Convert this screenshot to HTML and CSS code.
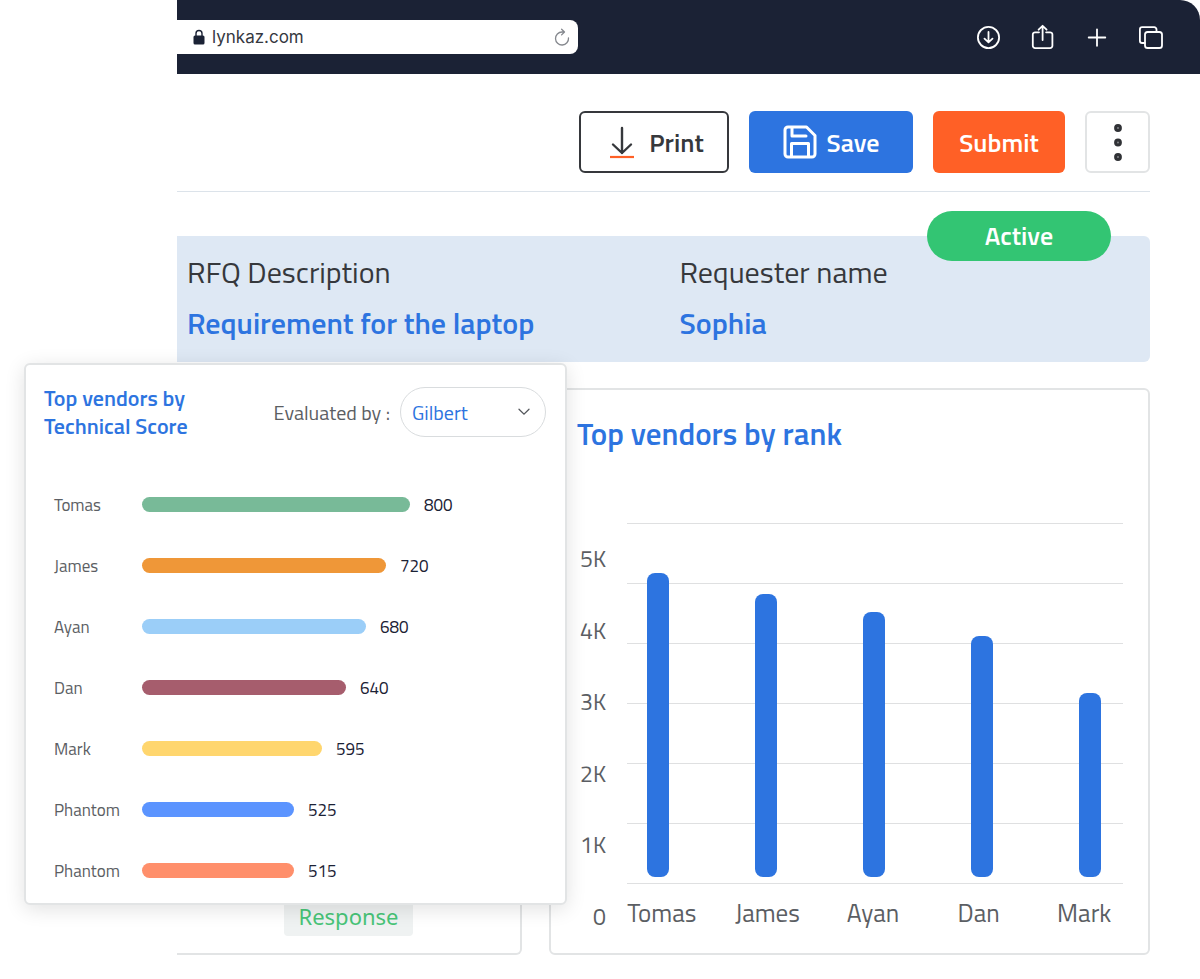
FILE: index.html
```html
<!DOCTYPE html>
<html lang="en">
<head>
  <meta charset="UTF-8" />
  <meta name="viewport" content="width=device-width, initial-scale=1.0"/>
  <title>Lynkaz - RFQ</title>
  <link rel="stylesheet" href="styles.css">
</head>
<body>

  <div class="browser">
    <!-- browser bar -->
    <header class="browser-bar">
      <div class="address">
        <svg class="lock" viewBox="0 0 12 16" width="12" height="16" aria-hidden="true">
          <path d="M3 7V4.500a3 3 0 0 1 6 0V7" fill="none" stroke="#1b2235" stroke-width="1.400"/>
          <rect x="0.500" y="6.500" width="11" height="9" rx="1.500" fill="#1b2235"/>
        </svg>
        <input type="text" value="lynkaz.com" aria-label="Address">
        <button class="icon-btn" aria-label="Reload">
          <svg viewBox="0 0 16 18" width="16" height="18" fill="none" stroke="#85888e" stroke-width="1.300" stroke-linecap="round" stroke-linejoin="round">
            <path d="M14.500 10A6.500 6.500 0 1 1 8 4h2.400M7.600 1.200l2.900 2.800-2.900 2.900"/>
          </svg>
        </button>
      </div>
      <nav class="browser-icons">
        <button class="icon-btn" aria-label="Downloads">
          <svg viewBox="0 0 26 26" width="26" height="26">
            <circle cx="12.500" cy="13.500" r="10.600"/>
            <path d="M12.500 8v10M8.500 14.700l4 3.600 4-3.600"/>
          </svg>
        </button>
        <button class="icon-btn" aria-label="Share">
          <svg viewBox="0 0 26 26" width="26" height="26">
            <path d="M9 8.300H5.100a2.300 2.300 0 0 0-2.300 2.300v11.200a2.300 2.300 0 0 0 2.300 2.300h15a2.300 2.300 0 0 0 2.300-2.300V10.600a2.300 2.300 0 0 0-2.300-2.300h-4M12.600 16V2M8.600 5.700l4-3.900 4 3.900"/>
          </svg>
        </button>
        <button class="icon-btn" aria-label="New tab">
          <svg viewBox="0 0 26 26" width="26" height="26">
            <path d="M13 5.300v16.500M4.700 13.500h16.600"/>
          </svg>
        </button>
        <button class="icon-btn" aria-label="Tabs">
          <svg viewBox="0 0 26 26" width="26" height="26">
            <rect x="7" y="8" width="17" height="16" rx="2.600"/>
            <path d="M6.800 19H4.200a2.300 2.300 0 0 1-2.300-2.300V5.500a2.300 2.300 0 0 1 2.300-2.300h12a2.300 2.300 0 0 1 2.300 2.300v2.300"/>
          </svg>
        </button>
      </nav>
    </header>

    <main class="content">
      <div class="toolbar">
        <button class="btn btn-print">
          <svg viewBox="0 0 24 34" width="24" height="34" fill="none" aria-hidden="true">
            <path d="M12 3v25M3 19.500l9 8.500 9-8.500" stroke="#36383c" stroke-width="2.400" stroke-linecap="round" stroke-linejoin="round"/>
            <path d="M0 32h24" stroke="#ff6026" stroke-width="2.200"/>
          </svg>
          Print
        </button>
        <button class="btn btn-save">
          <svg viewBox="0 0 34 34" width="34" height="34" fill="none" stroke="#fff" stroke-width="3" stroke-linejoin="round" stroke-linecap="round" aria-hidden="true">
            <path d="M5 2h18.500L32 10.500V29a3 3 0 0 1-3 3H5a3 3 0 0 1-3-3V5a3 3 0 0 1 3-3z"/>
            <path d="M9 2.500v8.500h14M8.500 31.500V18.500h17v13"/>
          </svg>
          Save
        </button>
        <button class="btn btn-submit">Submit</button>
        <button class="btn btn-more" aria-label="More options">
          <svg viewBox="0 0 10 40" width="10" height="40" fill="#8a8c90" stroke="#303236" stroke-width="3">
            <circle cx="5" cy="6" r="2.400"/>
            <circle cx="5" cy="20.500" r="2.400"/>
            <circle cx="5" cy="35" r="2.400"/>
          </svg>
        </button>
      </div>

      <section class="info">
        <span class="status">Active</span>
        <div>
          <p class="info-label">RFQ Description</p>
          <p class="info-value">Requirement for the laptop</p>
        </div>
        <div>
          <p class="info-label">Requester name</p>
          <p class="info-value">Sophia</p>
        </div>
      </section>

      <div class="cards">
        <section class="card response-card">
          <span class="response">Response</span>
        </section>

        <section class="card rank-card">
          <h2>Top vendors by rank</h2>
          <div class="chart">
            <ul class="y-axis">
              <li>5K</li>
              <li>4K</li>
              <li>3K</li>
              <li>2K</li>
              <li>1K</li>
              <li>0</li>
            </ul>
            <div class="plot">
              <div class="column" style="height: 86%"></div>
              <div class="column" style="height: 80%"></div>
              <div class="column" style="height: 75%"></div>
              <div class="column" style="height: 68%"></div>
              <div class="column" style="height: 52%"></div>
            </div>
            <ul class="x-axis">
              <li>Tomas</li>
              <li>James</li>
              <li>Ayan</li>
              <li>Dan</li>
              <li>Mark</li>
            </ul>
          </div>
        </section>
      </div>
    </main>
  </div>

  <!-- floating card over the window -->
  <section class="score-card">
    <div class="score-header">
      <h3>Top vendors by Technical Score</h3>
      <label for="evaluator">Evaluated by :</label>
      <div class="select-box">
        <select id="evaluator">
          <option>Gilbert</option>
        </select>
        <svg viewBox="0 0 12 8" width="12" height="8" aria-hidden="true">
          <path d="M1 1.200l5 5 5-5" fill="none" stroke="#55585d" stroke-width="1.300" stroke-linecap="round"/>
        </svg>
      </div>
    </div>
    <ul class="scores">
      <li><span class="name">Tomas</span><span class="bar green" style="width: 67%"></span><span>800</span></li>
      <li><span class="name">James</span><span class="bar orange" style="width: 61%"></span><span>720</span></li>
      <li><span class="name">Ayan</span><span class="bar sky" style="width: 56%"></span><span>680</span></li>
      <li><span class="name">Dan</span><span class="bar wine" style="width: 51%"></span><span>640</span></li>
      <li><span class="name">Mark</span><span class="bar yellow" style="width: 45%"></span><span>595</span></li>
      <li><span class="name">Phantom</span><span class="bar blue" style="width: 38%"></span><span>525</span></li>
      <li><span class="name">Phantom</span><span class="bar coral" style="width: 38%"></span><span>515</span></li>
    </ul>
  </section>

</body>
</html>
```
FILE: styles.css
```css
* {
  box-sizing: border-box;
}

body {
  position: relative;
  margin: 0;
  background-color: #fff;
  color: #5b5e63;
  font-family: "Titillium Web", Roboto, sans-serif;
}

h2, h3, p, ul {
  margin: 0;
  padding: 0;
}

ul {
  list-style: none;
}

button, input, select {
  font-family: inherit;
}

.browser {
  margin-left: 177px;
}

/* browser bar */
.browser-bar {
  display: flex;
  justify-content: space-between;
  align-items: center;
  height: 74px;
  padding-right: 36px;
  background-color: #1b2235;
  border-top-right-radius: 20px;
}

.address {
  display: flex;
  align-items: center;
  gap: 7px;
  width: 401px;
  height: 34px;
  padding: 0 8px 0 16px;
  background-color: #fff;
  border-radius: 0 8px 8px 0;
}

.address input {
  flex: 1;
  min-width: 0;
  padding: 0;
  border: none;
  background: none;
  color: #35383f;
  font-family: Inter, sans-serif;
  font-size: 17px;
}

.icon-btn {
  display: flex;
  padding: 0;
  border: none;
  background: none;
  cursor: pointer;
}

.browser-icons {
  display: flex;
  gap: 28px;
}

.browser-icons svg {
  fill: none;
  stroke: #fff;
  stroke-width: 1.8;
  stroke-linecap: round;
  stroke-linejoin: round;
}

/* page */
.content {
  padding: 37px 50px 24px 0;
}

.toolbar {
  display: flex;
  justify-content: flex-end;
  gap: 20px;
  padding-bottom: 18px;
  border-bottom: 1px solid #dce3ea;
}

.btn {
  display: flex;
  align-items: center;
  justify-content: center;
  height: 62px;
  border: none;
  border-radius: 6px;
  color: #fff;
  font-size: 26px;
  font-weight: 600;
  cursor: pointer;
}

.btn-print {
  gap: 15px;
  min-width: 150px;
  padding: 0 20px 0 26px;
  background-color: #fff;
  border: 2px solid #36383c;
  color: #36383c;
}

.btn-save {
  gap: 10px;
  min-width: 164px;
  background-color: #2d74e0;
}

.btn-submit {
  min-width: 132px;
  background-color: #ff6026;
}

.btn-more {
  min-width: 65px;
  background-color: #fff;
  border: 2px solid #e2e4e5;
}

.info {
  position: relative;
  display: grid;
  grid-template-columns: 1fr 1fr;
  gap: 22px;
  margin-top: 44px;
  padding: 18px 0 21px 10px;
  background-color: #dee8f4;
  border-radius: 0 6px 6px 0;
}

.status {
  position: absolute;
  top: -25px;
  right: 39px;
  width: 184px;
  border-radius: 25px;
  background-color: #33c573;
  color: #fff;
  font-size: 26px;
  font-weight: 600;
  line-height: 50px;
  text-align: center;
}

.info-label, .info-value {
  font-size: 30px;
  line-height: 36px;
}

.info-label {
  margin-bottom: 15px;
  color: #36383c;
}

.info-value {
  color: #2d74e0;
  font-weight: 600;
}

.cards {
  display: grid;
  grid-template-columns: 345fr 601fr;
  gap: 27px;
  margin-top: 26px;
}

.card {
  border: 2px solid #e2e4e5;
  border-radius: 6px;
}

.response-card {
  display: flex;
  align-items: flex-end;
  justify-content: center;
  padding-bottom: 17px;
  border-width: 1px 2px 2px 0;
  border-radius: 0 6px 6px 0;
}

.response {
  padding: 0 14px 3px;
  border-radius: 4px;
  background-color: #eff2f2;
  color: #48c478;
  font-family: "Noto Sans", sans-serif;
  font-size: 22px;
  line-height: 34px;
}

.rank-card {
  padding: 26px 25px 24px 26px;
}

.rank-card h2 {
  color: #2d74e0;
  font-size: 31px;
  font-weight: 600;
  line-height: 36px;
}

.chart {
  display: grid;
  grid-template-columns: 29px 1fr;
  column-gap: 21px;
  margin-top: 71px;
}

.y-axis {
  grid-row: span 2;
  display: flex;
  flex-direction: column;
  justify-content: space-between;
  padding-top: 24px;
  font-size: 23px;
  line-height: 24px;
  text-align: right;
}

.plot {
  display: flex;
  align-items: flex-end;
  justify-content: space-between;
  height: 361px;
  padding: 0 22px 7px 20px;
  background: repeating-linear-gradient(#dfe0e1 0 1px, transparent 1px 60px);
}

.column {
  width: 22px;
  border-radius: 8px;
  background-color: #2d74e0;
}

.x-axis {
  display: grid;
  grid-template-columns: repeat(5, 1fr);
  margin: 15px -14px 2px -18px;
  font-size: 25px;
  line-height: 28px;
  text-align: center;
}

/* floating score card */
.score-card {
  position: absolute;
  top: 363px;
  left: 24px;
  width: 543px;
  padding: 19px 19px 2px 18px;
  border: 2px solid #e2e4e5;
  border-radius: 6px;
  background-color: #fff;
  box-shadow: 0 4px 20px rgba(0, 0, 0, 0.12);
}

.score-header {
  display: flex;
  align-items: center;
  margin-bottom: 34px;
}

.score-header h3 {
  width: 160px;
  margin-right: auto;
  color: #2d74e0;
  font-size: 22px;
  font-weight: 600;
  line-height: 28px;
}

.score-header label {
  margin-right: 10px;
  font-size: 20px;
}

.select-box {
  position: relative;
}

.select-box select {
  appearance: none;
  width: 146px;
  height: 50px;
  padding: 0 11px;
  border: 1px solid #d9dcde;
  border-radius: 25px;
  background-color: #fff;
  color: #2d74e0;
  font-size: 20px;
}

.select-box svg {
  position: absolute;
  top: 21px;
  right: 16px;
  pointer-events: none;
}

.scores li {
  display: flex;
  align-items: center;
  height: 61px;
  padding: 0 4px 0 98px;
  color: #1b2235;
  font-size: 17px;
}

.scores .name {
  flex: none;
  width: 88px;
  margin-left: -88px;
  color: #5b5e63;
}

.bar {
  height: 15px;
  margin-right: 14px;
  border-radius: 8px;
}

.green {
  background-color: #78ba98;
}

.orange {
  background-color: #ef9738;
}

.sky {
  background-color: #9bcef8;
}

.wine {
  background-color: #a65d6d;
}

.yellow {
  background-color: #ffd66e;
}

.blue {
  background-color: #5b94ff;
}

.coral {
  background-color: #ff8f6b;
}
```
